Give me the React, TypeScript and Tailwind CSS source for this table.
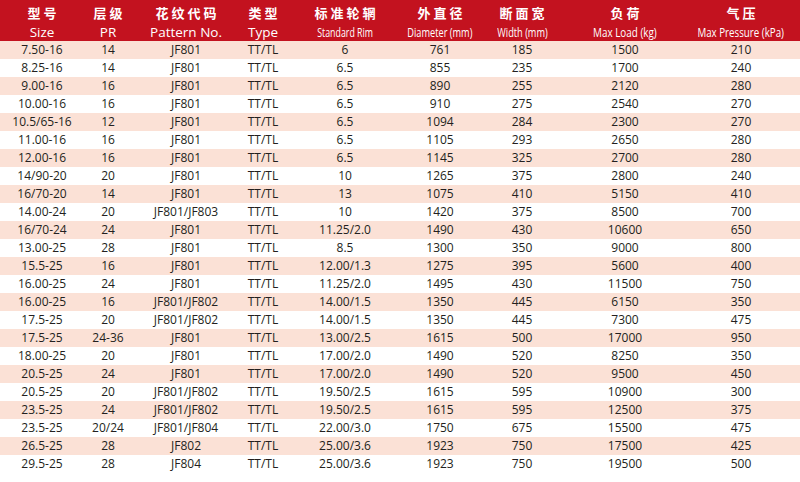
import React from "react";

const rows: string[][] = [
  ["7.50-16", "14", "JF801", "TT/TL", "6", "761", "185", "1500", "210"],
  ["8.25-16", "14", "JF801", "TT/TL", "6.5", "855", "235", "1700", "240"],
  ["9.00-16", "16", "JF801", "TT/TL", "6.5", "890", "255", "2120", "280"],
  ["10.00-16", "16", "JF801", "TT/TL", "6.5", "910", "275", "2540", "270"],
  ["10.5/65-16", "12", "JF801", "TT/TL", "6.5", "1094", "284", "2300", "270"],
  ["11.00-16", "16", "JF801", "TT/TL", "6.5", "1105", "293", "2650", "280"],
  ["12.00-16", "16", "JF801", "TT/TL", "6.5", "1145", "325", "2700", "280"],
  ["14/90-20", "20", "JF801", "TT/TL", "10", "1265", "375", "2800", "240"],
  ["16/70-20", "14", "JF801", "TT/TL", "13", "1075", "410", "5150", "410"],
  ["14.00-24", "20", "JF801/JF803", "TT/TL", "10", "1420", "375", "8500", "700"],
  ["16/70-24", "24", "JF801", "TT/TL", "11.25/2.0", "1490", "430", "10600", "650"],
  ["13.00-25", "28", "JF801", "TT/TL", "8.5", "1300", "350", "9000", "800"],
  ["15.5-25", "16", "JF801", "TT/TL", "12.00/1.3", "1275", "395", "5600", "400"],
  ["16.00-25", "24", "JF801", "TT/TL", "11.25/2.0", "1495", "430", "11500", "750"],
  ["16.00-25", "16", "JF801/JF802", "TT/TL", "14.00/1.5", "1350", "445", "6150", "350"],
  ["17.5-25", "20", "JF801/JF802", "TT/TL", "14.00/1.5", "1350", "445", "7300", "475"],
  ["17.5-25", "24-36", "JF801", "TT/TL", "13.00/2.5", "1615", "500", "17000", "950"],
  ["18.00-25", "20", "JF801", "TT/TL", "17.00/2.0", "1490", "520", "8250", "350"],
  ["20.5-25", "24", "JF801", "TT/TL", "17.00/2.0", "1490", "520", "9500", "450"],
  ["20.5-25", "20", "JF801/JF802", "TT/TL", "19.50/2.5", "1615", "595", "10900", "300"],
  ["23.5-25", "24", "JF801/JF802", "TT/TL", "19.50/2.5", "1615", "595", "12500", "375"],
  ["23.5-25", "20/24", "JF801/JF804", "TT/TL", "22.00/3.0", "1750", "675", "15500", "475"],
  ["26.5-25", "28", "JF802", "TT/TL", "25.00/3.6", "1923", "750", "17500", "425"],
  ["29.5-25", "28", "JF804", "TT/TL", "25.00/3.6", "1923", "750", "19500", "500"],
];

const headers: { cn: string; en: string; enClass: string }[] = [
  { cn: "型号", en: "Size", enClass: "text-[13.5px]" },
  { cn: "层级", en: "PR", enClass: "text-[13.5px]" },
  { cn: "花纹代码", en: "Pattern No.", enClass: "text-[13.5px]" },
  { cn: "类型", en: "Type", enClass: "text-[13.5px]" },
  { cn: "标准轮辋", en: "Standard Rim", enClass: "text-[13px] scale-x-[0.68]" },
  { cn: "外直径", en: "Diameter (mm)", enClass: "text-[13px] scale-x-[0.71]" },
  { cn: "断面宽", en: "Width (mm)", enClass: "text-[13px] scale-x-[0.71]" },
  { cn: "负荷", en: "Max Load (kg)", enClass: "text-[13px] scale-x-[0.76]" },
  { cn: "气压", en: "Max Pressure (kPa)", enClass: "text-[13px] scale-x-[0.75]" },
];

const gridCols =
  "grid grid-cols-[84px_48px_108px_46px_118px_72px_92px_114px_118px]";

export default function App() {
  return (
    <div className="w-[800px] h-[482px] bg-white overflow-hidden font-['Open_Sans',sans-serif] text-[#231f20]">
      <div className={`${gridCols} h-[41px] bg-[#c3121f] text-white`}>
        {headers.map((h, i) => (
          <div key={i} className="flex flex-col items-center pt-[4px]">
            <div className="h-[18px] leading-[18px] text-[13px] font-bold tracking-[3px] pl-[3px] font-['Noto_Sans_CJK_SC',sans-serif] whitespace-nowrap">
              {h.cn}
            </div>
            <div className="h-[18px] leading-[18px] whitespace-nowrap">
              <span className={`inline-block origin-center ${h.enClass}`}>
                {h.en}
              </span>
            </div>
          </div>
        ))}
      </div>
      {rows.map((r, ri) => (
        <div
          key={ri}
          className={`${gridCols} h-[18px] ${ri % 2 === 0 ? "bg-[#fbe1d6]" : "bg-white"}`}
        >
          {r.map((c, ci) => (
            <div
              key={ci}
              className="text-center text-[12px] leading-[18px] whitespace-nowrap"
            >
              {c}
            </div>
          ))}
        </div>
      ))}
    </div>
  );
}
